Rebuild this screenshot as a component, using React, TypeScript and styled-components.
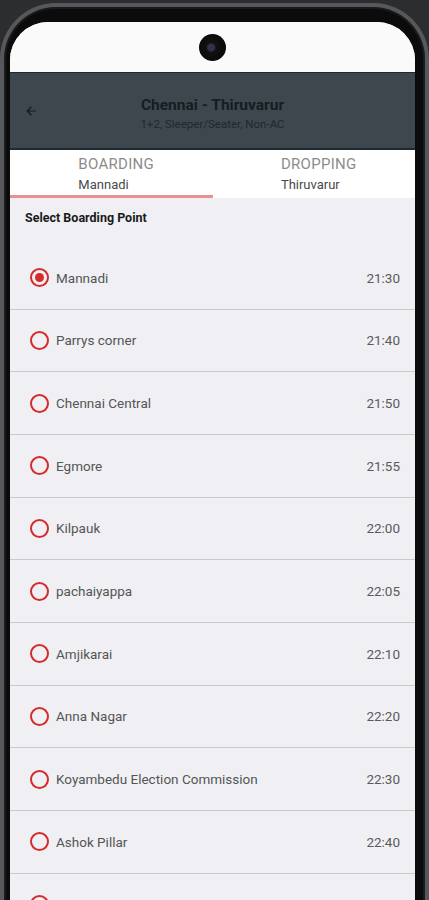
import styled, { createGlobalStyle } from "styled-components";

const points = [
  { name: "Mannadi", time: "21:30" },
  { name: "Parrys corner", time: "21:40" },
  { name: "Chennai Central", time: "21:50" },
  { name: "Egmore", time: "21:55" },
  { name: "Kilpauk", time: "22:00" },
  { name: "pachaiyappa", time: "22:05" },
  { name: "Amjikarai", time: "22:10" },
  { name: "Anna Nagar", time: "22:20" },
  { name: "Koyambedu Election Commission", time: "22:30" },
  { name: "Ashok Pillar", time: "22:40" },
  // last row is only peeking in under the fold
  { name: "", time: "" },
];

function App() {
  const selected = 0;

  return (
    <Page>
      <GlobalStyle />
      <Phone>
        <Screen>
          <StatusBar>
            <Camera />
          </StatusBar>

          <Header>
            <BackButton aria-label="back">
              <svg width="14" height="14" viewBox="0 0 24 24">
                <path
                  d="M20 11H7.83l5.59-5.59L12 4l-8 8 8 8 1.41-1.41L7.83 13H20v-2z"
                  fill="#111a1e"
                />
              </svg>
            </BackButton>
            <HeaderText>
              <Title>Chennai - Thiruvarur</Title>
              <Subtitle>1+2, Sleeper/Seater, Non-AC</Subtitle>
            </HeaderText>
          </Header>

          <Tabs>
            <Tab active>
              <TabInner>
                <TabLabel>BOARDING</TabLabel>
                <TabValue>Mannadi</TabValue>
              </TabInner>
            </Tab>
            <Tab>
              <TabInner>
                <TabLabel>DROPPING</TabLabel>
                <TabValue>Thiruvarur</TabValue>
              </TabInner>
            </Tab>
          </Tabs>

          <Body>
            <SectionTitle>Select Boarding Point</SectionTitle>
            <List>
              {points.map((p, i) => (
                <Row key={i}>
                  <Radio checked={i === selected} />
                  <PointName>{p.name}</PointName>
                  <Time>{p.time}</Time>
                </Row>
              ))}
            </List>
          </Body>
        </Screen>
      </Phone>
    </Page>
  );
}

export default App;

interface TabProps {
  active?: boolean;
}

interface RadioProps {
  checked?: boolean;
}

const GlobalStyle = createGlobalStyle`
  html, body {
    margin: 0;
    padding: 0;
    height: 900px;
    overflow: hidden;
    background: #2c2d2f;
    font-family: Roboto, "Noto Sans", Arial, sans-serif;
  }
`;

const Page = styled.div`
  width: 429px;
  height: 900px;
  padding-top: 3px;
  box-sizing: border-box;
  background: #2c2d2f;
  overflow: hidden;
`;

const Phone = styled.div`
  height: 910px;
  box-sizing: border-box;
  border: 4px solid #56585b;
  border-bottom: none;
  border-radius: 56px 56px 0 0;
  background: #0b0b0c;
  padding: 15px 10px 0 6px;
  box-shadow: inset 0 0 0 2px #1a1a1b;
`;

const Screen = styled.div`
  height: 100%;
  border-radius: 38px 38px 0 0;
  overflow: hidden;
  background: #f0f0f4;
  display: flex;
  flex-direction: column;
`;

const StatusBar = styled.div`
  height: 50px;
  flex-shrink: 0;
  background: #fafafa;
  display: flex;
  justify-content: center;
  align-items: center;
`;

const Camera = styled.div`
  width: 27px;
  height: 27px;
  border-radius: 50%;
  background: radial-gradient(circle at 45% 50%, #3a2f4a 0 3px, #111 5px, #050505 100%);
`;

const Header = styled.div`
  height: 78px;
  flex-shrink: 0;
  box-sizing: border-box;
  background: #3e474d;
  border-top: 1px solid #1f2a30;
  border-bottom: 2px solid #1f2a30;
  display: flex;
  align-items: center;
  position: relative;
`;

const BackButton = styled.div`
  position: absolute;
  left: 14px;
  top: 50%;
  transform: translateY(-50%);
  display: flex;
`;

const HeaderText = styled.div`
  flex: 1;
  display: flex;
  flex-direction: column;
  align-items: center;
  gap: 3px;
  padding-top: 5px;
`;

const Title = styled.div`
  font-size: 15.5px;
  font-weight: 700;
  color: #141d21;
  line-height: 18px;
`;

const Subtitle = styled.div`
  font-size: 11.5px;
  color: #1f292e;
  line-height: 14px;
`;

const Tabs = styled.div`
  height: 48px;
  flex-shrink: 0;
  background: #fff;
  display: grid;
  grid-template-columns: 1fr 1fr;
`;

const Tab = styled.div<TabProps>`
  display: flex;
  justify-content: center;
  align-items: center;
  padding-left: 10px;
  box-sizing: border-box;
  border-bottom: 3px solid ${p => (p.active ? "#e8918f" : "transparent")};
  padding-top: 3px;
`;

const TabInner = styled.div`
  display: flex;
  flex-direction: column;
  align-items: flex-start;
  gap: 3px;
`;

const TabLabel = styled.div`
  font-size: 15px;
  color: #8c8c8c;
  line-height: 18px;
  letter-spacing: 0.3px;
`;

const TabValue = styled.div`
  font-size: 13px;
  color: #4a4a4a;
  line-height: 17px;
`;

const Body = styled.div`
  flex: 1;
  background: #f0f0f4;
`;

const SectionTitle = styled.div`
  height: 49px;
  box-sizing: border-box;
  padding: 12px 15px 0;
  font-size: 12.5px;
  font-weight: 700;
  color: #1a1a1a;
`;

const List = styled.div`
  display: flex;
  flex-direction: column;
`;

const Row = styled.div`
  height: 62.67px;
  box-sizing: border-box;
  border-bottom: 1px solid #cacacd;
  display: flex;
  align-items: center;
  padding: 0 15px 0 20px;
`;

const Radio = styled.span<RadioProps>`
  width: 19px;
  height: 19px;
  box-sizing: border-box;
  border: 2px solid #d42b2b;
  border-radius: 50%;
  display: flex;
  justify-content: center;
  align-items: center;
  flex-shrink: 0;

  &::after {
    content: "";
    display: ${p => (p.checked ? "block" : "none")};
    width: 9px;
    height: 9px;
    border-radius: 50%;
    background: #d42b2b;
  }
`;

const PointName = styled.span`
  flex: 1;
  margin-left: 7px;
  font-size: 13.5px;
  color: #555;
`;

const Time = styled.span`
  font-size: 13.5px;
  color: #5a5a5a;
`;
